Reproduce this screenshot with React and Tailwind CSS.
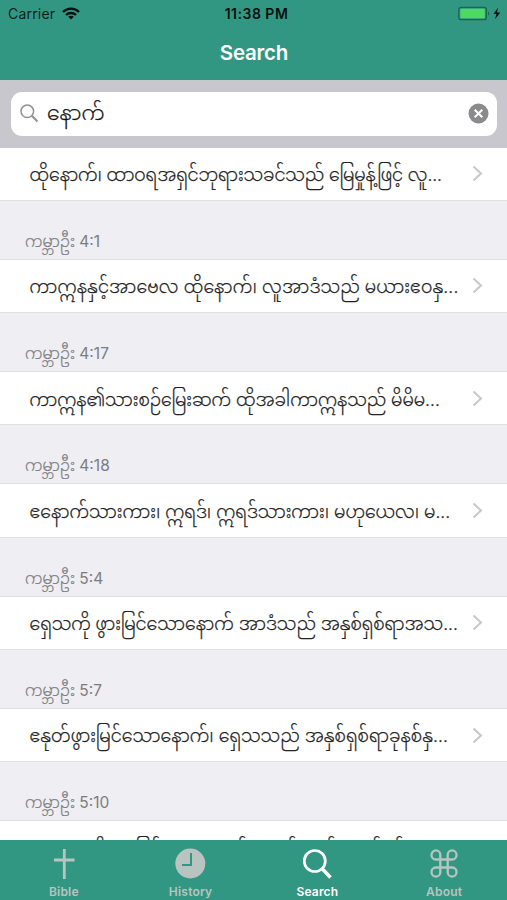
import React from "react";

const verses = [
  { text: "ထိုနောက်၊ ထာဝရအရှင်ဘုရားသခင်သည် မြေမှုန့်ဖြင့် လူ...", ref: "ကမ္ဘာဦး", num: "4:1", fit: "tracking-[-0.080px]" },
  { text: "ကာဣနနှင့်အာဗေလ ထိုနောက်၊ လူအာဒံသည် မယားဧဝနှ...", ref: "ကမ္ဘာဦး", num: "4:17", fit: "tracking-[0.170px]" },
  { text: "ကာဣန၏သားစဉ်မြေးဆက် ထိုအခါကာဣနသည် မိမိမ...", ref: "ကမ္ဘာဦး", num: "4:18", fit: "tracking-normal" },
  { text: "ဧနောက်သားကား၊ ဣရဒ်၊ ဣရဒ်သားကား၊ မဟုယေလ၊ မ...", ref: "ကမ္ဘာဦး", num: "5:4", fit: "tracking-normal" },
  { text: "ရှေသကို ဖွားမြင်သောနောက် အာဒံသည် အနှစ်ရှစ်ရာအသ...", ref: "ကမ္ဘာဦး", num: "5:7", fit: "tracking-normal" },
  { text: "ဧနုတ်ဖွားမြင်သောနောက်၊ ရှေသသည် အနှစ်ရှစ်ရာခုနစ်နှ...", ref: "ကမ္ဘာဦး", num: "5:10", fit: "tracking-[0.080px]" },
  { text: "ကာဣနကို ဖွားမြင်သောနောက်၊ ဧနုတ်သည် အနှစ်ရှစ်ရာ...", ref: "", num: "", fit: "tracking-[-0.080px]" },
];

function StatusBar() {
  return (
    <div className="grid h-[27px] grid-cols-3 items-center text-[14px] leading-none text-[#0b1f1b]">
      <div className="flex items-center gap-[7px] pl-[8px]">
        <span className="tracking-[0.2px]">Carrier</span>
        <svg width="18" height="13" viewBox="0 0 18 13" fill="none" stroke="#06110e" strokeWidth="2.3">
          <path d="M1 5 C5.5 .6 12.500 .6 17 5" />
          <path d="M4 8 C6.800 5.300 11.200 5.300 14 8" />
          <path d="M9 12.500 L6.200 9.700 C7.700 8.300 10.300 8.300 11.800 9.700 Z" fill="#06110e" stroke="none" />
        </svg>
      </div>
      <div className="pl-[6px] text-center font-semibold whitespace-nowrap tracking-[0.500px] text-[#06110e]">11:38 PM</div>
      <div className="flex justify-end pr-[6px]">
        <svg width="43" height="15" viewBox="0 0 43 15">
          <rect x="0.800" y="1.300" width="27.500" height="12.400" rx="2.200" fill="none" stroke="#1d6454" strokeWidth="1.300" />
          <rect x="2.300" y="2.800" width="24.500" height="9.400" rx="1" fill="#4cd964" />
          <path d="M30 5.500 C31.600 6.300 31.600 8.700 30 9.500 Z" fill="#1d6454" />
          <path d="M40 1.800 L35.500 8 H38.500 L37 13.200 L42.200 6.500 H39 Z" fill="#06110e" />
        </svg>
      </div>
    </div>
  );
}

function SearchBar() {
  return (
    <div className="h-[68px] shrink-0 bg-[#c8c7cd] pt-[12px] pr-[10px] pl-[11px]">
      <div className="flex h-[44px] items-center rounded-[11px] bg-white pr-[8px] pl-[9px]">
        <svg width="19" height="19" viewBox="0 0 19 19" fill="none" stroke="#929296" strokeWidth="1.500">
          <circle cx="7.300" cy="7.300" r="6.300" />
          <path d="M11.800 11.800 L17.500 17.500" strokeWidth="2" />
        </svg>
        <span className="ml-[8px] grow text-[20.500px] leading-none font-light text-[#111] [-webkit-text-stroke:0.25px_#222]">နောက်</span>
        <svg width="21" height="21" viewBox="0 0 21 21">
          <circle cx="10.500" cy="10.500" r="10" fill="#8b8b8e" />
          <path d="M6.700 6.700 L14.300 14.300 M14.300 6.700 L6.700 14.300" stroke="#fff" strokeWidth="2" />
        </svg>
      </div>
    </div>
  );
}

function Verse({ text, reference, num, fit }) {
  return (
    <section className="shrink-0">
      <div className="flex h-[52.300px] items-center justify-between bg-white pr-[24px] pl-[29.500px]">
        <span className={"pt-[2px] text-[17.400px] leading-none font-light whitespace-nowrap text-[#222] [-webkit-text-stroke:0.25px_#222] " + fit}>{text}</span>
        <svg className="shrink-0" width="11" height="17" viewBox="0 0 11 17" fill="none" stroke="#c7c7cc" strokeWidth="2">
          <path d="M1.500 1.500 L9 8.500 L1.500 15.500" />
        </svg>
      </div>
      <div className="h-[60px] border-y border-[#e0e0e4] bg-[#eeeef3] pt-[33px] pl-[25px] text-[15.500px] leading-[16px] whitespace-nowrap text-[#7c7c82]">
        <span className="font-light [-webkit-text-stroke:0.2px_#7c7c82]">{reference}</span> {num}
      </div>
    </section>
  );
}

const tabs = [
  {
    label: "Bible",
    icon: <path d="M16.300 2 V32 M6 13 H26.500" stroke="currentColor" strokeWidth="2.800" />,
  },
  {
    label: "History",
    icon: (
      <>
        <circle cx="15.300" cy="16.500" r="15" fill="currentColor" />
        <path d="M16 6 V18 H7" stroke="#319783" strokeWidth="2" />
      </>
    ),
  },
  {
    label: "Search",
    icon: (
      <>
        <circle cx="12.800" cy="14" r="10.500" stroke="currentColor" strokeWidth="2.700" />
        <path d="M20 21.500 L28.500 30.500" stroke="currentColor" strokeWidth="3.500" />
      </>
    ),
  },
  {
    label: "About",
    icon: (
      <path
        d="M11.300 12.500 H18.700 V20.500 H11.300 Z M11.300 12.500 H6.800 A4.300 4.300 0 0 1 2.500 8.200 V7.800 A4.400 4.400 0 0 1 11.300 7.800 Z M18.700 12.500 V7.800 A4.400 4.400 0 0 1 27.500 7.800 V8.200 A4.300 4.300 0 0 1 23.200 12.500 Z M18.700 20.500 H23.200 A4.300 4.300 0 0 1 27.500 24.800 V25.200 A4.400 4.400 0 0 1 18.700 25.200 Z M11.300 20.500 V25.200 A4.400 4.400 0 0 1 2.500 25.200 V24.800 A4.300 4.300 0 0 1 6.800 20.500 Z"
        stroke="currentColor"
        strokeWidth="2.300"
      />
    ),
  },
];

export default function App() {
  return (
    <div className="flex h-[900px] w-[507px] flex-col overflow-hidden bg-[#eeeef3] font-[Inter,'Noto_Sans_Myanmar','Noto_Sans',sans-serif]">
      <header className="h-[79.500px] shrink-0 bg-[#319783]">
        <StatusBar />
        <h1 className="pt-[12px] pl-px text-center text-[20.500px] leading-[28px] font-semibold tracking-[-0.200px] text-white">Search</h1>
      </header>
      <SearchBar />
      <main className="flex min-h-0 grow flex-col overflow-hidden">
        {verses.map((v) => (
          <Verse key={v.text} text={v.text} reference={v.ref} num={v.num} fit={v.fit} />
        ))}
      </main>
      <nav className="grid h-[60px] shrink-0 grid-cols-4 bg-[#319783] pt-[7px]">
        {tabs.map((t) => (
          <div
            key={t.label}
            className={"flex flex-col items-center text-[12px] leading-[16px] font-semibold " + (t.label === "Search" ? "text-white" : "text-[#b9c4c1]")}
          >
            <svg className="overflow-visible" width="30" height="34" viewBox="0 0 30 34" fill="none">
              {t.icon}
            </svg>
            <span className="mt-[3px] pl-px tracking-[0.200px]">{t.label}</span>
          </div>
        ))}
      </nav>
    </div>
  );
}
